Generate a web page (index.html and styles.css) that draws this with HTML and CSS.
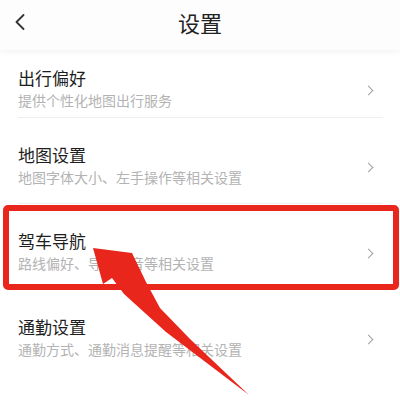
FILE: index.html
```html
<!DOCTYPE html>
<html lang="zh-CN">
<head>
<meta charset="utf-8">
<title>设置</title>
<link rel="stylesheet" href="styles.css">
</head>
<body>
<div class="page">
  <header class="topbar">
    <svg class="back" viewBox="0 0 10 16" width="10" height="16"><path d="M8.5 1 L1.5 8 L8.5 15" fill="none" stroke="#333" stroke-width="1.8" stroke-linecap="round" stroke-linejoin="round"/></svg>
    <h1 class="title">设置</h1>
  </header>
  <ul class="list">
    <li class="item item-first">
      <div class="text">
        <div class="item-title">出行偏好</div>
        <div class="item-sub">提供个性化地图出行服务</div>
      </div>
      <span class="chev"></span>
    </li>
    <li class="item">
      <div class="text">
        <div class="item-title">地图设置</div>
        <div class="item-sub">地图字体大小、左手操作等相关设置</div>
      </div>
      <span class="chev"></span>
    </li>
    <li class="item">
      <div class="text">
        <div class="item-title">驾车导航</div>
        <div class="item-sub">路线偏好、导航语音等相关设置</div>
      </div>
      <span class="chev"></span>
    </li>
    <li class="item item-last">
      <div class="text">
        <div class="item-title">通勤设置</div>
        <div class="item-sub">通勤方式、通勤消息提醒等相关设置</div>
      </div>
      <span class="chev"></span>
    </li>
  </ul>
  <div class="highlight"></div>
  <svg class="arrow" viewBox="0 0 400 403" width="400" height="403">
    <polygon points="93,248 132,253 146,282 160,308 190,339 249,395 166,332 124,294 112,278 103,284" fill="#e8261c"/>
  </svg>
</div>
</body>
</html>
```
FILE: styles.css
```css
* { box-sizing: border-box; }
html, body { margin: 0; padding: 0; background: #fff; }
body {
  font-family: "Noto Sans CJK SC", "Noto Sans", sans-serif;
  width: 400px;
  height: 403px;
  overflow: hidden;
}
.page { position: relative; width: 400px; height: 403px; }
.topbar {
  height: 50px;
  display: flex;
  align-items: center;
  justify-content: center;
  position: relative;
  background: #fdfdfd;
  box-shadow: 0 2px 5px rgba(0,0,0,0.05);
}
.back { position: absolute; left: 15px; top: 14px; }
.title {
  margin: 0;
  font-size: 22px;
  font-weight: 400;
  color: #222;
  line-height: 26px;
  margin-top: -7px;
}
.list { list-style: none; margin: 0; padding: 0 17px 0 18px; }
.item {
  display: flex;
  align-items: center;
  padding: 27px 0 17px;
  border-bottom: 1px solid #eeeeee;
}
.item-first { padding-top: 18px; padding-bottom: 8px; }
.item-last { border-bottom: none; }
.text { flex: 1; }
.item-title {
  font-size: 17px;
  line-height: 20px;
  color: #1e1e1e;
}
.item-sub {
  font-size: 14px;
  line-height: 18px;
  margin-top: 3px;
  color: #b3b3b3;
}
.chev {
  width: 7px;
  height: 7px;
  border-top: 1.5px solid #a0a0a0;
  border-right: 1.5px solid #a0a0a0;
  transform: rotate(45deg);
  margin-right: 11px;
  margin-top: 4px;
}
.highlight {
  position: absolute;
  left: 3px;
  top: 205px;
  width: 396px;
  height: 85px;
  border: 6px solid #e8261c;
  border-radius: 5px;
}
.arrow { position: absolute; left: 0; top: 0; }
```
